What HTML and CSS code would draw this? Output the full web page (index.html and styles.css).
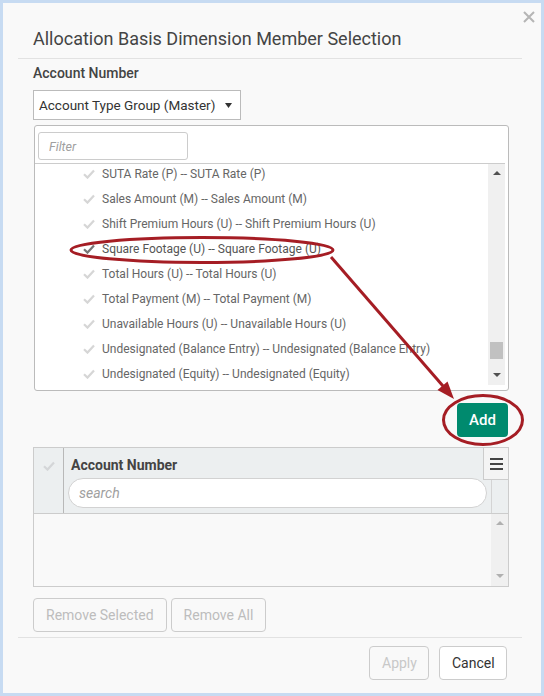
FILE: index.html
```html
<!DOCTYPE html>
<html lang="en">
<head>
    <meta charset="UTF-8">
    <title>Allocation Basis Dimension Member Selection</title>
    <link rel="stylesheet" href="styles.css">
</head>
<body>
    <div class="dialog">
        <button class="close-btn" aria-label="Close">
            <svg width="12" height="12" viewBox="0 0 12 12"><path d="M1 1 L11 11 M11 1 L1 11" stroke="#b5b5b5" stroke-width="2"/></svg>
        </button>
        <div class="dialog-header">
            <h1 class="dialog-title">Allocation Basis Dimension Member Selection</h1>
        </div>

        <div class="dialog-body">
            <div class="field-label">Account Number</div>
            <div class="type-select">
                <span>Account Type Group (Master)</span>
                <svg width="7" height="5" viewBox="0 0 7 5"><path d="M0 0 H7 L3.5 5 Z" fill="#333"/></svg>
            </div>

            <div class="member-list">
                <div class="filter-bar">
                    <input class="filter-input" type="text" placeholder="Filter">
                </div>
                <div class="list-scroll">
                    <div class="list-viewport">
                        <ul class="list-rows" id="memberRows"></ul>
                    </div>
                    <div class="scrollbar">
                        <span class="arrow-up"></span>
                        <div class="scroll-track"><div class="scroll-thumb"></div></div>
                        <span class="arrow-down"></span>
                    </div>
                </div>
            </div>

            <div class="add-row">
                <button class="btn-add">Add</button>
            </div>

            <div class="grid">
                <div class="grid-header">
                    <div class="grid-check">
                        <svg width="12" height="10" viewBox="0 0 12 10"><path d="M1 5.2 L4.5 8.6 L11 1.4" fill="none" stroke="#d4d6d8" stroke-width="2.2"/></svg>
                    </div>
                    <div class="grid-col">
                        <div class="grid-col-title">Account Number</div>
                        <input class="grid-search" type="text" placeholder="search">
                    </div>
                    <div class="grid-side"></div>
                    <button class="grid-menu" aria-label="Menu">
                        <span></span><span></span><span></span>
                    </button>
                </div>
                <div class="grid-body">
                    <div class="grid-empty"></div>
                    <div class="scrollbar grid-scrollbar">
                        <span class="arrow-up"></span>
                        <div class="scroll-track"></div>
                        <span class="arrow-down"></span>
                    </div>
                </div>
            </div>

            <div class="grid-actions">
                <button class="btn-muted">Remove Selected</button>
                <button class="btn-muted">Remove All</button>
            </div>
        </div>

        <div class="dialog-footer">
            <button class="btn-muted btn-apply">Apply</button>
            <button class="btn-cancel">Cancel</button>
        </div>
    </div>

    <!-- callout annotations drawn over the dialog -->
    <svg class="callouts" width="544" height="696" viewBox="0 0 544 696">
        <ellipse cx="202" cy="250" rx="131" ry="12.5" fill="none" stroke="#a51d24" stroke-width="3"/>
        <ellipse cx="483" cy="420" rx="39.5" ry="24.5" fill="none" stroke="#a51d24" stroke-width="3"/>
        <line x1="331" y1="257" x2="443" y2="386" stroke="#a51d24" stroke-width="3"/>
        <polygon points="454,399 437.5,390 447.5,381.5" fill="#a51d24"/>
    </svg>

    <script>
        const members = [
            "SUTA Rate (P) -- SUTA Rate (P)",
            "Sales Amount (M) -- Sales Amount (M)",
            "Shift Premium Hours (U) -- Shift Premium Hours (U)",
            "Square Footage (U) -- Square Footage (U)",
            "Total Hours (U) -- Total Hours (U)",
            "Total Payment (M) -- Total Payment (M)",
            "Unavailable Hours (U) -- Unavailable Hours (U)",
            "Undesignated (Balance Entry) -- Undesignated (Balance Entry)",
            "Undesignated (Equity) -- Undesignated (Equity)"
        ];
        const selected = 3;
        const rows = document.getElementById("memberRows");

        members.forEach((name, i) => {
            const li = document.createElement("li");
            li.className = "list-row" + (i === selected ? " is-selected" : "");
            li.innerHTML = `<svg class="row-check" width="12" height="10" viewBox="0 0 12 10"><path d="M1 5.2 L4.5 8.6 L11 1.4" fill="none" stroke-width="2.2"/></svg><span>${name}</span>`;
            rows.appendChild(li);
        });
    </script>
</body>
</html>
```

FILE: styles.css
```css
:root {
    --frame: #c7dbf2;
    --panel: #f9f9f9;
    --line: #cccccc;
    --text: #444444;
    --muted: #bdbdbd;
    --green: #008a6e;
    --scroll: #f0f0f0;
}

* {
    box-sizing: border-box;
}

body {
    margin: 0;
    background: var(--frame);
    font-family: Roboto, "Liberation Sans", sans-serif;
    color: var(--text);
    position: relative;
    width: 544px;
    height: 696px;
    overflow: hidden;
}

.dialog {
    margin: 3px;
    height: 690px;
    background: var(--panel);
    position: relative;
}

.close-btn {
    position: absolute;
    top: 7px;
    right: 5px;
    width: 14px;
    height: 14px;
    padding: 0;
    border: none;
    background: none;
    display: flex;
    align-items: center;
    justify-content: center;
}

.dialog-header {
    margin: 0 19px 0 15px;
    padding: 23px 0 7px 15px;
    border-bottom: 1px solid #e2e2e2;
}

.dialog-title {
    margin: 0;
    font-size: 18px;
    font-weight: 400;
    line-height: 25px;
    color: #444;
}

.dialog-body {
    margin: 0 32px 0 30px;
}

.field-label {
    margin-top: 4px;
    font-size: 14px;
    font-weight: 500;
    line-height: 20px;
    color: #444;
}

.type-select {
    margin-top: 7px;
    width: 208px;
    height: 30px;
    border: 1px solid #bbb;
    background: #fff;
    display: flex;
    align-items: center;
    justify-content: space-between;
    padding: 0 8px 0 5px;
    font-size: 13.5px;
    color: #333;
}

.member-list {
    margin: 5px 0 0 1px;
    height: 266px;
    border: 1px solid #bbb;
    border-radius: 3px;
    background: #fff;
}

.filter-bar {
    padding: 6px 3px 3px 3px;
    border-bottom: 1px solid var(--line);
    margin-right: 3px;
}

.filter-input {
    display: block;
    width: 150px;
    height: 28px;
    border: 1px solid var(--line);
    border-radius: 3px;
    padding: 0 10px;
    font-family: inherit;
    font-size: 12.5px;
}

.filter-input::placeholder,
.grid-search::placeholder {
    color: #a0a0a0;
    font-style: italic;
}

.list-scroll {
    display: flex;
    height: 221px;
    margin-right: 3px;
}

.list-viewport {
    flex: 1;
    overflow: hidden;
}

.list-rows {
    list-style: none;
    margin: -3px 0 0;
    padding: 0;
}

.list-row {
    height: 25px;
    display: flex;
    align-items: center;
    padding-left: 48px;
    gap: 7px;
    font-size: 12px;
    color: #666;
    white-space: nowrap;
}

.row-check {
    stroke: #d6d6d6;
    flex: none;
}

.list-row.is-selected .row-check {
    stroke: #777;
}

.list-row.is-selected {
    color: #555;
}

.scrollbar {
    width: 17px;
    background: var(--scroll);
    display: flex;
    flex-direction: column;
    align-items: center;
}

.scroll-track {
    flex: 1;
    width: 100%;
    position: relative;
}

.scroll-thumb {
    position: absolute;
    left: 2px;
    right: 2px;
    bottom: 14px;
    height: 17px;
    background: #c1c1c1;
}

.arrow-up,
.arrow-down {
    width: 0;
    height: 0;
    border-left: 4px solid transparent;
    border-right: 4px solid transparent;
}

.arrow-up {
    margin-top: 7px;
    border-bottom: 4px solid #505050;
}

.arrow-down {
    margin-bottom: 8px;
    border-top: 4px solid #505050;
}

.add-row {
    display: flex;
    justify-content: flex-end;
    margin-top: 12px;
    padding-right: 1px;
}

.btn-add {
    width: 51px;
    height: 34px;
    border: none;
    border-radius: 4px;
    background: var(--green);
    color: #fff;
    font-family: inherit;
    font-size: 15px;
    font-weight: 500;
}

.grid {
    margin-top: 10px;
    height: 140px;
    border: 1px solid var(--line);
}

.grid-header {
    display: flex;
    height: 66px;
    background: #eceff0;
    border-bottom: 1px solid var(--line);
    position: relative;
}

.grid-check {
    width: 30px;
    border-right: 1px solid #b8b8b8;
    display: flex;
    justify-content: center;
    padding-top: 13px;
}

.grid-col {
    flex: 1;
    padding: 7px 4px 0 4px;
}

.grid-col-title {
    padding-left: 3px;
    font-size: 14px;
    font-weight: 700;
    line-height: 20px;
    color: #444;
}

.grid-search {
    display: block;
    margin-top: 3px;
    width: 100%;
    height: 30px;
    border: 1px solid #d2d2d2;
    border-radius: 15px;
    background: #fff;
    padding: 0 10px;
    font-family: inherit;
    font-size: 14px;
}

.grid-side {
    width: 17px;
    border-left: 1px solid #d4d4d4;
}

.grid-menu {
    position: absolute;
    top: -1px;
    right: -1px;
    width: 26px;
    height: 33px;
    border: 1px solid var(--line);
    background: #f4f4f4;
    padding: 0;
    display: flex;
    flex-direction: column;
    align-items: center;
    justify-content: center;
    gap: 3px;
}

.grid-menu span {
    display: block;
    width: 13px;
    height: 2px;
    background: #444;
}

.grid-body {
    display: flex;
    height: 72px;
}

.grid-empty {
    flex: 1;
}

.grid-scrollbar .arrow-up {
    margin-top: 7px;
    border-bottom-color: #b0b0b0;
}

.grid-scrollbar .arrow-down {
    margin-bottom: 8px;
    border-top-color: #b0b0b0;
}

.grid-actions {
    display: flex;
    gap: 4px;
    margin-top: 11px;
}

.btn-muted,
.btn-cancel {
    height: 34px;
    padding: 0 12px;
    border: 1px solid var(--line);
    border-radius: 4px;
    background: transparent;
    font-family: inherit;
    font-size: 14px;
    color: var(--muted);
}

.dialog-footer {
    margin: 5px 19px 0 15px;
    padding-top: 8px;
    border-top: 1px solid #e2e2e2;
    display: flex;
    justify-content: flex-end;
    gap: 10px;
    padding-right: 15px;
}

.btn-apply {
    width: 60px;
    color: #c8c8c8;
}

.btn-cancel {
    width: 68px;
    background: #fff;
    color: #333;
}

.callouts {
    position: absolute;
    top: 0;
    left: 0;
    pointer-events: none;
}
```
